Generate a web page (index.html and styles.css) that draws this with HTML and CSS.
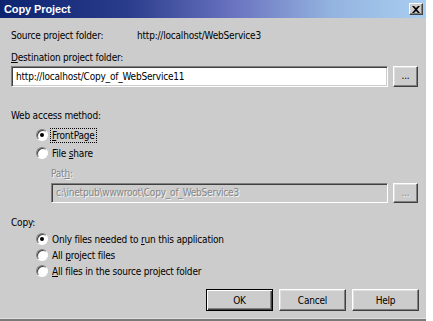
FILE: index.html
```html
<!DOCTYPE html>
<html>
<head>
<meta charset="utf-8">
<link rel="stylesheet" href="styles.css">
</head>
<body>
<div class="dialog">
  <div class="titlebar">
    <span class="title">Copy Project</span>
    <span class="close">
      <svg width="8" height="7" viewBox="0 0 8 7"><path d="M0 0h2l2 2 2-2h2L5 3.5 8 7H6L4 5 2 7H0l3-3.5z" fill="#000"/></svg>
    </span>
  </div>
  <div class="content">
    <div class="row-source">
      <span class="src-label">Source project folder:</span>
      <span class="src-value">http://localhost/WebService3</span>
    </div>
    <div class="label dest-label"><u>D</u>estination project folder:</div>
    <div class="field-row">
      <div class="input">http://localhost/Copy_of_WebService11</div>
      <div class="btn small">...</div>
    </div>
    <div class="label web-label">Web access method:</div>
    <div class="indent">
      <div class="radio-row first"><span class="radio checked"></span><span class="rlabel focus"><u>F</u>rontPage</span></div>
      <div class="radio-row second"><span class="radio"></span><span class="rlabel">File <u>s</u>hare</span></div>
      <div class="label disabled path-label">Pat<u>h</u>:</div>
      <div class="field-row path-row">
        <div class="input disabled-input">c:\inetpub\wwwroot\Copy_of_WebService3</div>
        <div class="btn small disabled-btn">...</div>
      </div>
    </div>
    <div class="label copy-label">Copy:</div>
    <div class="indent">
      <div class="radio-row c1"><span class="radio checked"></span><span class="rlabel">Only files needed to <u>r</u>un this application</span></div>
      <div class="radio-row c2"><span class="radio"></span><span class="rlabel">All <u>p</u>roject files</span></div>
      <div class="radio-row c2"><span class="radio"></span><span class="rlabel"><u>A</u>ll files in the source project folder</span></div>
    </div>
    <div class="buttons">
      <div class="btn default">OK</div>
      <div class="btn">Cancel</div>
      <div class="btn">Help</div>
    </div>
  </div>
</div>
</body>
</html>
```
FILE: styles.css
```css
html, body {
  margin: 0;
  padding: 0;
  background: #ffffff;
}
body {
  font-family: "DejaVu Sans Condensed", "Liberation Sans", Arial, sans-serif;
  font-size: 10px;
  letter-spacing: -0.2px;
  color: #000;
}
.dialog {
  width: 426px;
  height: 321px;
  box-sizing: border-box;
  background: #cccccc;
  border-bottom: 2px solid #7a7a7a;
  box-shadow: inset 0 -1px 0 #dedede;
  overflow: hidden;
}
.titlebar {
  height: 18px;
  background: linear-gradient(90deg, #0c2470 0%, #2a3c8c 30%, #6a74c0 55%, #94b4e0 78%, #a8cef0 100%);
  display: flex;
  align-items: center;
  justify-content: space-between;
  padding: 0 3px 0 4px;
}
.title {
  color: #fff;
  font-family: "Liberation Sans", Arial, sans-serif;
  font-weight: bold;
  font-size: 11px;
  letter-spacing: -0.1px;
}
.close {
  width: 14px;
  height: 12px;
  box-sizing: border-box;
  background: #cccccc;
  border: 1px solid;
  border-color: #fff #404040 #404040 #fff;
  box-shadow: inset -1px -1px 0 #808080;
  display: flex;
  align-items: center;
  justify-content: center;
}
.content {
  padding-left: 11px;
}
.row-source {
  margin-top: 11px;
  height: 13px;
  line-height: 13px;
  display: flex;
}
.src-label {
  width: 126px;
}
.label {
  height: 13px;
  line-height: 13px;
}
.dest-label {
  margin-top: 9px;
}
.field-row {
  display: flex;
  gap: 5px;
  margin-top: 2px;
}
.input {
  width: 377px;
  height: 21px;
  box-sizing: border-box;
  background: #fff;
  border: 1px solid;
  border-color: #808080 #fff #fff #808080;
  box-shadow: inset 1px 1px 0 #404040, inset -1px -1px 0 #cccccc;
  padding-left: 4px;
  line-height: 19px;
  white-space: nowrap;
  overflow: hidden;
}
.btn {
  height: 22px;
  box-sizing: border-box;
  border: 1px solid;
  border-color: #fff #404040 #404040 #fff;
  box-shadow: inset -1px -1px 0 #808080, inset 1px 1px 0 #e0e0e0;
  background: #cccccc;
  display: flex;
  align-items: center;
  justify-content: center;
  width: 67px;
}
.btn.small {
  width: 25px;
  height: 21px;
  padding-bottom: 2px;
}
.web-label {
  margin-top: 22px;
}
.indent {
  padding-left: 24px;
}
.radio-row {
  height: 14px;
  display: flex;
  align-items: center;
}
.radio-row.first {
  margin-top: 6px;
}
.radio-row.second {
  margin-top: 4px;
}
.radio {
  width: 12px;
  height: 12px;
  box-sizing: border-box;
  border-radius: 50%;
  border: 1px solid;
  border-color: #808080 #fff #fff #808080;
  background: #fff;
  box-shadow: inset 1px 1px 0 #404040;
  position: relative;
  margin-left: 1px;
  margin-right: 3px;
}
.radio.checked::after {
  content: "";
  position: absolute;
  left: 3px;
  top: 3px;
  width: 4px;
  height: 4px;
  border-radius: 50%;
  background: #000;
}
.rlabel {
  line-height: 13px;
  padding: 0 1px;
}
.focus {
  outline: 1px dotted #000;
  outline-offset: 0;
}
.disabled {
  color: #868686;
  text-shadow: 1px 1px 0 #f4f4f4;
}
.path-label {
  margin-top: 7px;
  padding-left: 16px;
}
.path-row {
  margin-left: 16px;
  margin-top: 3px;
}
.path-row .input,
.path-row .btn {
  height: 20px;
}
.disabled-input {
  width: 337px;
  background: #cccccc;
  color: #868686;
  text-shadow: 1px 1px 0 #f4f4f4;
  line-height: 18px;
}
.disabled-btn {
  color: #868686;
  text-shadow: 1px 1px 0 #f4f4f4;
}
.copy-label {
  margin-top: 13px;
}
.radio-row.c1 {
  margin-top: 3px;
}
.radio-row.c2 {
  margin-top: 2px;
}
.buttons {
  display: flex;
  gap: 6px;
  margin-top: 11px;
  padding-left: 195px;
}
.btn.default {
  border: 1px solid #000;
  box-shadow: inset 1px 1px 0 #fff, inset -1px -1px 0 #404040, inset -2px -2px 0 #808080;
}
```
